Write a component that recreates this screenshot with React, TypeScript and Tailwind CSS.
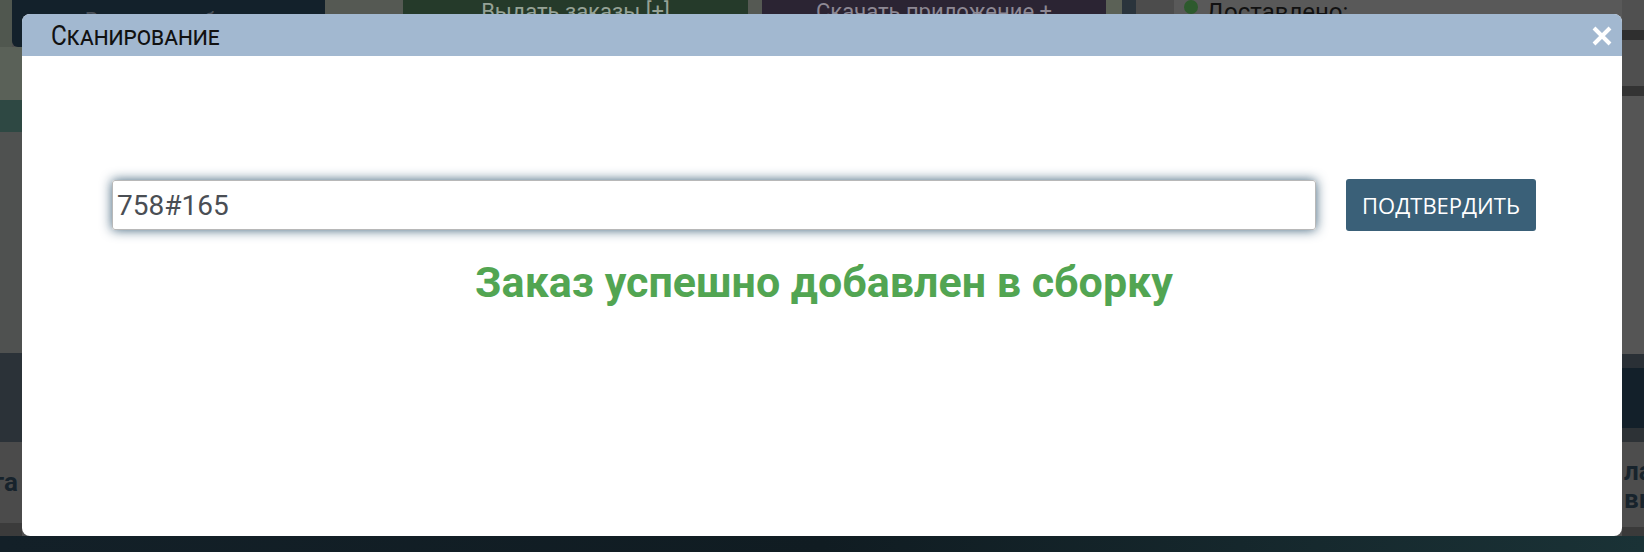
export default function App() {
  return (
    <div className="relative w-[1644px] h-[552px] overflow-hidden bg-[#4e4e4e] font-['Roboto',sans-serif]">
      {/* page behind the dimmed overlay */}
      <div className="flex flex-col w-full h-full">
        <div className="flex flex-1">
          <div className="w-[22px] flex flex-col">
            <div className="h-[47px] flex">
              <div className="w-[12px] bg-[#50574f]" />
              <div className="flex-1 bg-[#13212b] rounded-bl-[6px]" />
            </div>
            <div className="h-[53px] bg-[#5a6158]" />
            <div className="h-[32px] bg-[#2e4843]" />
            <div className="h-[221px] bg-[#4f5150]" />
            <div className="h-[89px] bg-[#2b3238]" />
            <div className="h-[81px] bg-[#4b4b4b] flex items-center overflow-hidden">
              <span className="text-[26px] font-bold text-[#17232c] -ml-[9px] whitespace-nowrap">та</span>
            </div>
            <div className="flex-1 bg-[#3b3b3b]" />
          </div>
          <div className="flex-1 flex flex-col">
            <div className="h-[47px] flex">
              <div className="w-[303px] bg-[#13212b] rounded-br-[6px] flex justify-center overflow-hidden">
                <span className="mt-[4px] text-[22px] text-[#4a5058]">Вернуть в сборку</span>
              </div>
              <div className="w-[78px] bg-[#555953]" />
              <div className="w-[345px] bg-[#253a2a] rounded-b-[6px] flex justify-center overflow-hidden">
                <span className="-mt-[5px] text-[22px] text-[#95a296]">Выдать заказы [+]</span>
              </div>
              <div className="w-[14px] bg-[#555953]" />
              <div className="w-[344px] bg-[#2b2433] rounded-b-[6px] flex justify-center overflow-hidden">
                <span className="-mt-[5px] text-[22px] text-[#8d8894]">Скачать приложение +</span>
              </div>
              <div className="w-[16px] bg-[#5b6156]" />
              <div className="w-[14px] bg-[#2a343c]" />
              <div className="w-[38px] bg-[#4c4c4c]" />
              <div className="flex-1 bg-[#595959] flex items-start gap-[8px] pl-[10px] overflow-hidden">
                <span className="mt-[0px] w-[14px] h-[14px] rounded-full bg-[#2d5a2d]" />
                <span className="-mt-[6px] text-[24px] text-[#111]">Доставлено:</span>
              </div>
            </div>
            <div className="flex-1 bg-[#505050]" />
          </div>
          <div className="w-[22px] flex flex-col">
            <div className="h-[30px] bg-[#505050]" />
            <div className="h-[10px] bg-[#2f2f2f]" />
            <div className="h-[46px] bg-[#4f4f4f]" />
            <div className="h-[10px] bg-[#333]" />
            <div className="h-[258px] bg-[#555]" />
            <div className="h-[14px] bg-[#2a3036]" />
            <div className="h-[60px] bg-[#13202a]" />
            <div className="h-[14px] bg-[#2d3236]" />
            <div className="h-[85px] bg-[#4d4d4d] flex flex-col justify-center overflow-hidden leading-[28px] pl-[2px]">
              <span className="text-[26px] font-bold text-[#17232c] whitespace-nowrap">ла</span>
              <span className="text-[26px] font-bold text-[#17232c] whitespace-nowrap">вк</span>
            </div>
            <div className="flex-1 bg-[#3a3a3a]" />
          </div>
        </div>
        <div className="h-[16px] bg-gradient-to-r from-[#132028] via-[#101c22] to-[#1a3236]" />
      </div>

      {/* modal */}
      <div className="absolute left-[22px] top-[14px] w-[1600px] h-[522px] rounded-[8px] overflow-hidden bg-white flex flex-col">
        <div className="h-[42px] bg-[#a2b8d0] flex items-center justify-between pl-[29px] pr-[10px]">
          <span className="inline-block origin-left scale-x-[0.9] text-[27px] leading-none text-[#111] [font-variant-caps:small-caps] font-['Roboto',sans-serif] mt-[2px]">
            Сканирование
          </span>
          <svg width="20" height="20" viewBox="0 0 20 20" className="mt-[2px]">
            <path d="M2 2 L18 18 M18 2 L2 18" stroke="white" strokeWidth="4" />
          </svg>
        </div>
        <div className="flex flex-col items-center pt-[123px] pl-[90px] pr-[86px]">
          <div className="w-full flex items-center gap-[30px]">
            <input
              defaultValue="758#165"
              className="flex-1 h-[50px] border border-[#b8b8b8] rounded-[3px] pl-[4px] text-[28px] text-[#4a4e54] font-['Roboto',sans-serif] outline-none shadow-[0_0_12px_rgba(52,88,115,0.95)]"
            />
            <button className="w-[190px] h-[52px] bg-[#3a6078] rounded-[3px] text-white text-[22px] font-['Open_Sans',sans-serif]">
              ПОДТВЕРДИТЬ
            </button>
          </div>
          <div className="mt-[27px] text-[43px] leading-[49px] font-bold text-[#52a552]">
            Заказ успешно добавлен в сборку
          </div>
        </div>
      </div>
    </div>
  )
}
